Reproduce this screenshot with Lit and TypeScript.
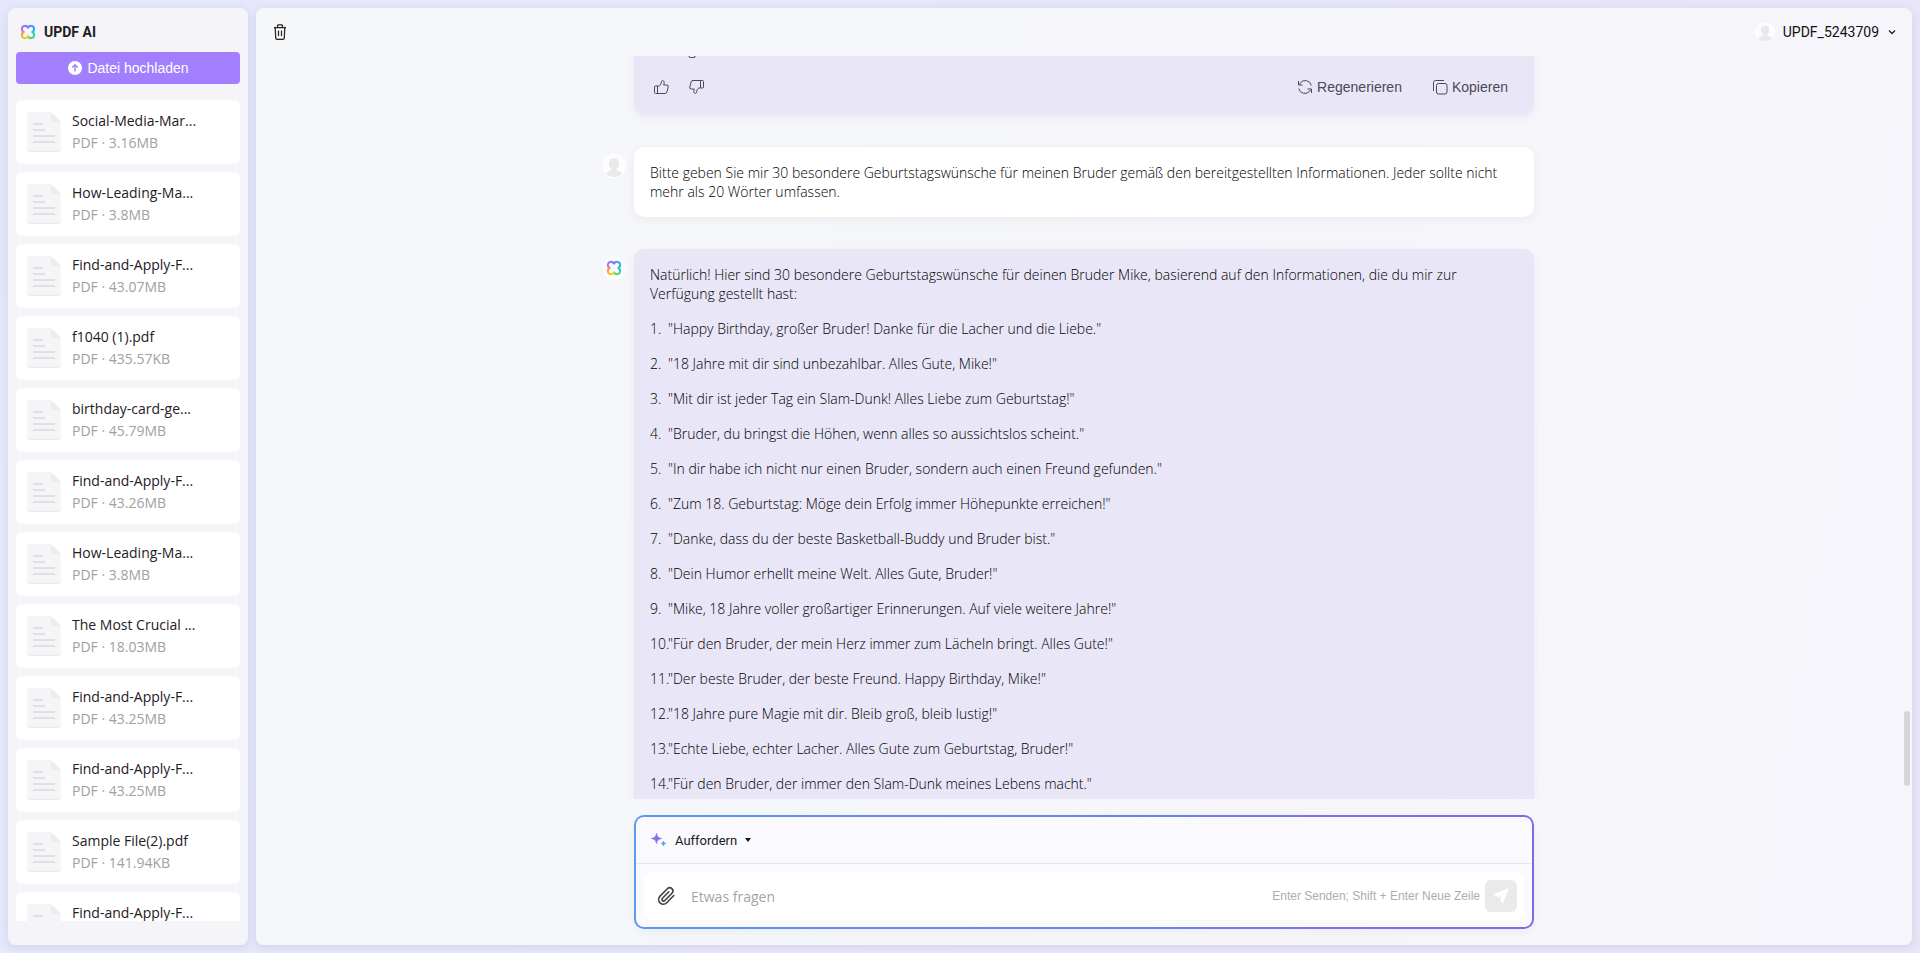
import { LitElement, html, css, svg } from 'lit';
import { customElement } from 'lit/decorators.js';

const files = [
  ['Social-Media-Mar...', '3.16MB'],
  ['How-Leading-Ma...', '3.8MB'],
  ['Find-and-Apply-F...', '43.07MB'],
  ['f1040 (1).pdf', '435.57KB'],
  ['birthday-card-ge...', '45.79MB'],
  ['Find-and-Apply-F...', '43.26MB'],
  ['How-Leading-Ma...', '3.8MB'],
  ['The Most Crucial ...', '18.03MB'],
  ['Find-and-Apply-F...', '43.25MB'],
  ['Find-and-Apply-F...', '43.25MB'],
  ['Sample File(2).pdf', '141.94KB'],
  ['Find-and-Apply-F...', '43.25MB'],
];

const wishes = [
  'Happy Birthday, großer Bruder! Danke für die Lacher und die Liebe.',
  '18 Jahre mit dir sind unbezahlbar. Alles Gute, Mike!',
  'Mit dir ist jeder Tag ein Slam-Dunk! Alles Liebe zum Geburtstag!',
  'Bruder, du bringst die Höhen, wenn alles so aussichtslos scheint.',
  'In dir habe ich nicht nur einen Bruder, sondern auch einen Freund gefunden.',
  'Zum 18. Geburtstag: Möge dein Erfolg immer Höhepunkte erreichen!',
  'Danke, dass du der beste Basketball-Buddy und Bruder bist.',
  'Dein Humor erhellt meine Welt. Alles Gute, Bruder!',
  'Mike, 18 Jahre voller großartiger Erinnerungen. Auf viele weitere Jahre!',
  'Für den Bruder, der mein Herz immer zum Lächeln bringt. Alles Gute!',
  'Der beste Bruder, der beste Freund. Happy Birthday, Mike!',
  '18 Jahre pure Magie mit dir. Bleib groß, bleib lustig!',
  'Echte Liebe, echter Lacher. Alles Gute zum Geburtstag, Bruder!',
  'Für den Bruder, der immer den Slam-Dunk meines Lebens macht.',
];

const logo = html`<svg width="16" height="16" viewBox="0 0 16 16" fill="none" stroke-width="2" aria-hidden="true">
  <defs>
    <linearGradient id="tl" x1="8" y1="3" x2="3" y2="8" gradientUnits="userSpaceOnUse"><stop stop-color="#7f7cf6"/><stop offset="1" stop-color="#c46ff0"/></linearGradient>
    <linearGradient id="tr" x1="8" y1="3" x2="13" y2="8" gradientUnits="userSpaceOnUse"><stop stop-color="#5b8df5"/><stop offset="1" stop-color="#2bb3e6"/></linearGradient>
    <linearGradient id="br" x1="13" y1="8" x2="8" y2="13" gradientUnits="userSpaceOnUse"><stop stop-color="#35c6c8"/><stop offset="1" stop-color="#63d36a"/></linearGradient>
    <linearGradient id="bl" x1="8" y1="13" x2="3" y2="8" gradientUnits="userSpaceOnUse"><stop stop-color="#f0d81e"/><stop offset="1" stop-color="#fb9a3c"/></linearGradient>
  </defs>
  <path stroke="url(#tl)" d="M4.300 8A3.100 3.100 0 1 1 8 4.300"/>
  <path stroke="url(#tr)" d="M8 4.300A3.100 3.100 0 1 1 11.700 8"/>
  <path stroke="url(#br)" d="M11.700 8A3.100 3.100 0 1 1 8 11.700"/>
  <path stroke="url(#bl)" d="M8 11.700A3.100 3.100 0 1 1 4.300 8"/>
</svg>`;

const person = svg`<circle cx="12" cy="12" r="12" fill="#fdfdfd"/><path d="M7 9c0-3.200 2-4.500 5-4.500s5 1.300 5 4.500c0 2.800-1 4.900-2.400 6.100v1.100c2 1 4.800 1.500 5.600 3.900A11.500 11.500 0 0 1 12 23a11.500 11.500 0 0 1-8.200-2.900c.8-2.400 3.600-2.900 5.600-3.900v-1.100C8 13.900 7 11.800 7 9z" fill="#e8e9eb"/>`;

const thumb = svg`<path d="M4.500 7h-2a1 1 0 0 0-1 1v5.500a1 1 0 0 0 1 1h2zM4.500 7h1.700c1.500-1 2-2.700 2.300-4.300.2-1.200 1.200-1.500 2-.8.9.8.9 2.300.2 4.100h3a1.600 1.600 0 0 1 1.500 2l-1.300 5a2 2 0 0 1-1.900 1.500H4.500"/>`;

@customElement('app-root')
export class AppRoot extends LitElement {
  static styles = css`
    :host {
      --text: "Open Sans", "Noto Sans", sans-serif;
      --ui: "Liberation Sans", Arial, sans-serif;
      display: grid;
      grid-template-columns: 240px minmax(0, 1fr);
      gap: 8px;
      box-sizing: border-box;
      height: 100vh;
      padding: 8px;
      background: linear-gradient(120deg, #e5e8fb, #e8e5f8);
      color: #1f2024;
      font: 14px/19px var(--text);
      overflow: hidden;
    }
    * { box-sizing: border-box; }
    button { border: 0; padding: 0; background: none; color: inherit; font: inherit; cursor: pointer; display: flex; align-items: center; }
    svg { display: block; flex: none; }
    p, ol, ul { margin: 0; padding: 0; }
    .panel { background: #f5f5f9; border-radius: 8px; box-shadow: 0 2px 8px rgba(90, 85, 150, .14); min-height: 0; }
    .side { display: flex; flex-direction: column; padding: 8px 8px 24px; }
    .brand { display: flex; align-items: center; gap: 8px; height: 32px; padding: 0 4px; margin-bottom: 4px; font: 700 14px/19px Roboto, sans-serif; }
    .upload { flex: none; justify-content: center; gap: 4px; height: 32px; border-radius: 4px; background: #a27fff; color: #fff; font: 14px/19px var(--ui); }
    .files { list-style: none; display: flex; flex-direction: column; gap: 8px; margin-top: 16px; flex: 1; min-height: 0; overflow: hidden; }
    .file { flex: none; display: flex; align-items: center; gap: 10px; height: 64px; padding: 0 10px; border-radius: 6px; background: #fff; line-height: 22px; }
    .size { color: #a0a0a3; }
    .main { position: relative; display: flex; flex-direction: column; background: linear-gradient(100deg, #f5f7f9, #f6f5fb); }
    .top { flex: none; display: flex; justify-content: space-between; align-items: center; height: 48px; padding: 0 15px; }
    .user { gap: 8px; color: #111; font-family: Roboto, sans-serif; }
    .scroll { flex: 1; min-height: 0; overflow: hidden; }
    .thread { display: flex; flex-direction: column; gap: 32px; margin-top: -32px; }
    .row { display: grid; grid-template-columns: 24px minmax(0, 900px) 24px; gap: 8px; justify-content: center; }
    .avatar { display: grid; place-items: center; width: 24px; height: 24px; margin-top: 7px; border-radius: 50%; background: #fafbfd; }
    .msg { display: flex; flex-direction: column; gap: 16px; padding: 16px; border-radius: 10px; background: #e8e6f7; box-shadow: 0 3px 8px rgba(60, 50, 90, .06); color: #000; font-weight: 300; }
    .mine { background: #fff; }
    .wishes { list-style: none; display: flex; flex-direction: column; gap: 16px; }
    .wish { display: grid; grid-template-columns: 18px minmax(0, 1fr); white-space: nowrap; }
    .tools { display: flex; align-items: center; height: 24px; padding: 0 10px 0 3px; gap: 20px; color: #4a4a55; font: 14px/19px var(--ui); }
    .tools .push { margin-left: auto; }
    .tool { gap: 4px; }
    .copy { margin-left: 10px; }
    .thumb { fill: none; stroke: #4a4a55; stroke-width: 1; stroke-linejoin: round; }
    .flip { transform: rotate(180deg); }
    .composer { width: 100%; border: 2px solid transparent; border-radius: 10px; background: linear-gradient(#f9f9fe, #f9f9fe) padding-box, linear-gradient(90deg, #599bee, #7f6be4) border-box; box-shadow: 0 4px 8px rgba(60, 60, 90, .04); }
    .dock { flex: none; padding: 16px 0; }
    .prompt { height: 46px; padding: 0 15px; gap: 7px; font: 13px/19px Roboto, sans-serif; }
    .field { border-top: 1px solid #e4e6f0; padding: 8px 8px 7px; }
    .box { display: flex; align-items: center; height: 48px; padding: 0 7px 0 11px; border-radius: 8px; background: #fff; }
    .ask { flex: 1; min-width: 0; height: 32px; margin-left: 14px; padding: 0; border: 0; outline: 0; background: none; color: inherit; font: 14px/19px var(--text); }
    .ask::placeholder { color: #a4a4a8; opacity: 1; }
    .hint { color: #adadb1; font: 12px/16px var(--ui); white-space: nowrap; }
    .send { justify-content: center; width: 32px; height: 32px; margin-left: 5px; border-radius: 6px; background: #eaeaea; }
    .thumbbar { position: absolute; right: 2px; top: 75%; width: 6px; height: 8%; border-radius: 3px; background: #d6d6da; }
  `;

  render() {
    return html`
      <aside class="panel side">
        <div class="brand">${logo}<span>UPDF AI</span></div>
        <button class="upload">
          <svg width="16" height="16" viewBox="0 0 16 16"><circle cx="8" cy="8" r="7" fill="#fff"/><path d="M8 11.500V5M5.200 7.600 8 4.800l2.800 2.800" fill="none" stroke="#a27fff" stroke-width="1.400"/></svg>
          <span>Datei hochladen</span>
        </button>
        <ul class="files">
          ${files.map(([name, size]) => html`<li class="file">
            <svg width="36" height="40" viewBox="0 0 36 40" aria-hidden="true">
              <path d="M4 0h21l10 10v27a3 3 0 0 1-3 3H4a3 3 0 0 1-3-3V3a3 3 0 0 1 3-3z" fill="#e9e9ec"/>
              <path d="M4 0h21l10 10v26a3 3 0 0 1-3 3H4a3 3 0 0 1-3-3V3a3 3 0 0 1 3-3z" fill="#f5f5f7"/>
              <path d="M25 0v7a3 3 0 0 0 3 3h7z" fill="#ededf0"/>
              <path d="M7 12h10M7 18h12M7 24h22M7 30h22" stroke="#e0e0e4" stroke-width="2"/>
            </svg>
            <div><div>${name}</div><div class="size">PDF · ${size}</div></div>
          </li>`)}
        </ul>
      </aside>
      <main class="panel main">
        <header class="top">
          <button aria-label="Löschen">
            <svg width="18" height="18" viewBox="0 0 18 18" fill="none" stroke="#222" stroke-width="1.200"><path d="M3 4.600h12M6.500 4.600V2.600a.8.8 0 0 1 .8-.8h3.400a.8.8 0 0 1 .8.800v2M4.200 4.600l.5 10.300a1.500 1.500 0 0 0 1.500 1.400h5.600a1.500 1.500 0 0 0 1.500-1.400l.5-10.300M7.500 7.500v5.500M10.500 7.500v5.500"/></svg>
          </button>
          <button class="user">
            <svg width="20" height="20" viewBox="0 0 24 24">${person}</svg>
            <span>UPDF_5243709</span>
            <svg width="10" height="10" viewBox="0 0 10 10" fill="none" stroke="#222" stroke-width="1.300"><path d="M2 3.500l3 3 3-3"/></svg>
          </button>
        </header>
        <section class="scroll">
          <div class="thread">
            <div class="row">
              <span></span>
              <article class="msg">
                <p>Wichtig!</p>
                <div class="tools">
                  <button aria-label="Gefällt mir"><svg class="thumb" width="16" height="16" viewBox="0 0 16 16">${thumb}</svg></button>
                  <button aria-label="Gefällt mir nicht"><svg class="thumb flip" width="16" height="16" viewBox="0 0 16 16">${thumb}</svg></button>
                  <button class="tool push">
                    <svg width="16" height="16" viewBox="0 0 16 16" fill="none" stroke="#4a4a55"><path d="M14.300 6.500A6.300 6.300 0 0 0 3 4.200L2 5.500M1.700 9.500A6.300 6.300 0 0 0 13 11.800l1-1.300M1.500 2v4H5.500M14.500 14v-4h-4"/></svg>
                    <span>Regenerieren</span>
                  </button>
                  <button class="tool copy">
                    <svg width="16" height="16" viewBox="0 0 16 16" fill="none" stroke="#4a4a55"><rect x="4.500" y="4.500" width="10.500" height="10.500" rx="2"/><path d="M1.500 12V3.500a2 2 0 0 1 2-2H12"/></svg>
                    <span>Kopieren</span>
                  </button>
                </div>
              </article>
            </div>
            <div class="row">
              <span class="avatar"><svg width="24" height="24" viewBox="0 0 24 24">${person}</svg></span>
              <article class="msg mine">
                <p>Bitte geben Sie mir 30 besondere Geburtstagswünsche für meinen Bruder gemäß den bereitgestellten Informationen. Jeder sollte nicht mehr als 20 Wörter umfassen.</p>
              </article>
            </div>
            <div class="row">
              <span class="avatar">${logo}</span>
              <article class="msg">
                <p>Natürlich! Hier sind 30 besondere Geburtstagswünsche für deinen Bruder Mike, basierend auf den Informationen, die du mir zur Verfügung gestellt hast:</p>
                <ol class="wishes">
                  ${wishes.map((w, i) => html`<li class="wish"><span>${i + 1}.</span><span>"${w}"</span></li>`)}
                </ol>
              </article>
            </div>
          </div>
        </section>
        <div class="row dock">
          <span></span>
          <form class="composer" @submit=${(e: Event) => e.preventDefault()}>
            <button type="button" class="prompt">
              <svg width="17" height="17" viewBox="0 0 17 17"><path d="M5.500 1.500c.6 3.200 1.600 4.300 5 5-3.400.7-4.400 1.800-5 5-.6-3.200-1.600-4.300-5-5 3.400-.7 4.400-1.800 5-5z" fill="#8b6cf0" stroke="#8b6cf0" stroke-width=".8"/><path d="M12.500 9c.2 1.600.8 2.200 2.500 2.500-1.700.3-2.300.9-2.500 2.500-.2-1.600-.8-2.200-2.500-2.500 1.700-.3 2.300-.9 2.500-2.500z" fill="#4a9bf0" stroke="#4a9bf0" stroke-width=".6"/></svg>
              <span>Auffordern</span>
              <svg width="8" height="6" viewBox="0 0 8 6"><path d="M1 1h6L4 5z" fill="#111"/></svg>
            </button>
            <div class="field">
              <div class="box">
                <button type="button" aria-label="Datei anhängen">
                  <svg width="22" height="22" viewBox="0 0 24 24" fill="none" stroke="#444" stroke-width="1.800" stroke-linecap="round"><path d="M20.500 11.500l-7.700 7.900a5.100 5.100 0 0 1-7.300-7.200l8-8.100a3.500 3.500 0 0 1 5 4.900l-7.800 7.900a1.800 1.800 0 0 1-2.600-2.500l6.900-7"/></svg>
                </button>
                <input class="ask" aria-label="Etwas fragen" placeholder="Etwas fragen">
                <span class="hint">Enter Senden; Shift + Enter Neue Zeile</span>
                <button class="send" aria-label="Senden">
                  <svg width="18" height="18" viewBox="0 0 18 18" fill="#fff"><path d="M17 1 1 7.300l5.800 3.100L12 6l-4.400 5.200L10.700 17z"/></svg>
                </button>
              </div>
            </div>
          </form>
          <span></span>
        </div>
        <div class="thumbbar"></div>
      </main>
    `;
  }
}
